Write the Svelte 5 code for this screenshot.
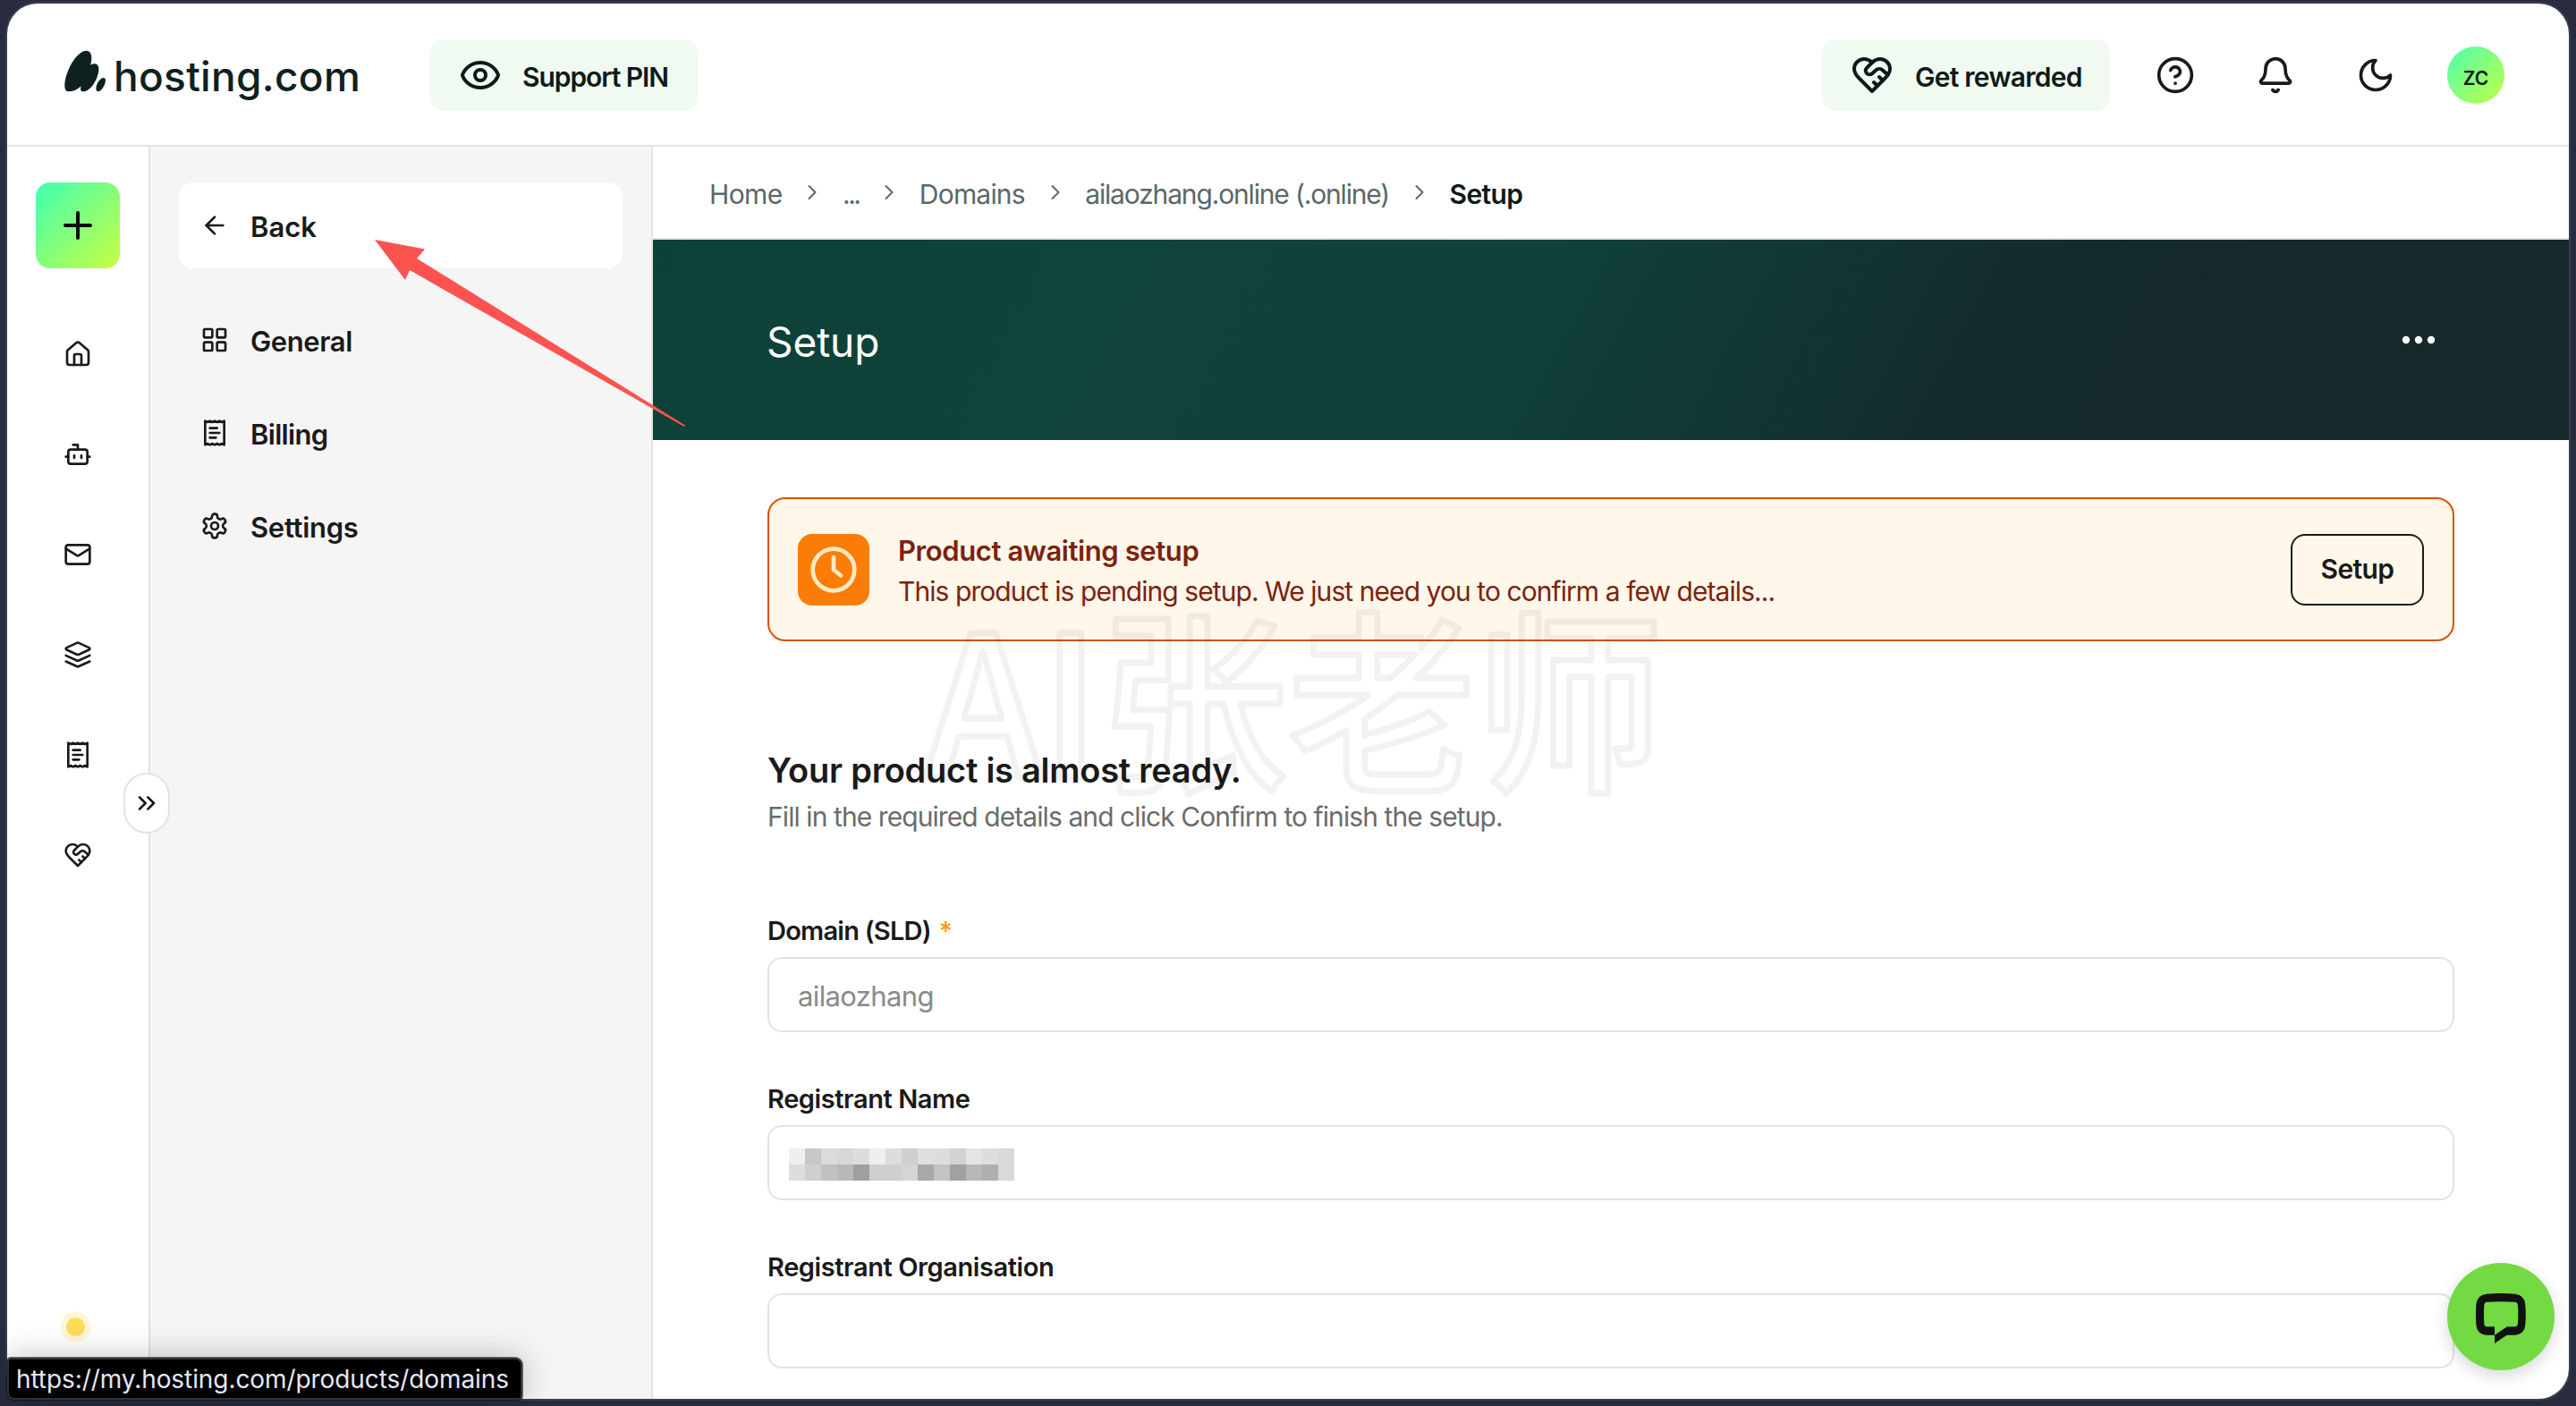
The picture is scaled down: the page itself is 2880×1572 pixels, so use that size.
<script lang="ts">
	const icons: Record<string, string[]> = {
		eye: [
			"M2.062 12.348a1 1 0 0 1 0-.696 10.75 10.75 0 0 1 19.876 0 1 1 0 0 1 0 .696 10.75 10.75 0 0 1-19.876 0",
			"M9 12a3 3 0 1 0 6 0 3 3 0 1 0-6 0",
		],
		heart: [
			"M19 14c1.49-1.46 3-3.21 3-5.5A5.5 5.5 0 0 0 16.5 3c-1.76 0-3 .5-4.5 2-1.5-1.5-2.74-2-4.5-2A5.5 5.5 0 0 0 2 8.5c0 2.3 1.5 4.05 3 5.5l7 7Z",
			"M12 5 9.04 7.96a2.17 2.17 0 0 0 0 3.08c.82.82 2.13.85 3 .07l2.07-1.9a2.82 2.82 0 0 1 3.79 0l2.96 2.66",
			"m18 15-2-2",
			"m15 18-2-2",
		],
		help: [
			"M2 12a10 10 0 1 0 20 0 10 10 0 1 0-20 0",
			"M9.09 9a3 3 0 0 1 5.83 1c0 2-3 3-3 3",
			"M12 17h.01",
		],
		bell: [
			"M10.268 21a2 2 0 0 0 3.464 0",
			"M3.262 15.326A1 1 0 0 0 4 17h16a1 1 0 0 0 .74-1.673C19.41 13.956 18 12.499 18 8A6 6 0 0 0 6 8c0 4.499-1.411 5.956-2.738 7.326",
		],
		moon: ["M12 3a6 6 0 0 0 9 9 9 9 0 1 1-9-9Z"],
		plus: ["M5 12h14", "M12 5v14"],
		home: [
			"M15 21v-8a1 1 0 0 0-1-1h-4a1 1 0 0 0-1 1v8",
			"M3 10a2 2 0 0 1 .709-1.528l7-6a2 2 0 0 1 2.582 0l7 6A2 2 0 0 1 21 10v9a2 2 0 0 1-2 2H5a2 2 0 0 1-2-2z",
		],
		bot: [
			"M12 8V4H8",
			"M6 8h12a2 2 0 0 1 2 2v8a2 2 0 0 1-2 2H6a2 2 0 0 1-2-2v-8a2 2 0 0 1 2-2Z",
			"M2 14h2",
			"M20 14h2",
			"M15 13v2",
			"M9 13v2",
		],
		mail: [
			"M4 4h16a2 2 0 0 1 2 2v12a2 2 0 0 1-2 2H4a2 2 0 0 1-2-2V6a2 2 0 0 1 2-2Z",
			"m22 7-8.97 5.7a1.94 1.94 0 0 1-2.06 0L2 7",
		],
		layers: [
			"m12.83 2.18a2 2 0 0 0-1.66 0L2.6 6.08a1 1 0 0 0 0 1.83l8.58 3.91a2 2 0 0 0 1.66 0l8.58-3.9a1 1 0 0 0 0-1.83Z",
			"m22 12.65-9.17 4.16a2 2 0 0 1-1.66 0L2 12.65",
			"m22 17.65-9.17 4.16a2 2 0 0 1-1.66 0L2 17.65",
		],
		receipt: [
			"M4 2v20l2-1 2 1 2-1 2 1 2-1 2 1 2-1 2 1V2l-2 1-2-1-2 1-2-1-2 1-2-1-2 1Z",
			"M14 8H8",
			"M16 12H8",
			"M13 16H8",
		],
		arrowLeft: ["m12 19-7-7 7-7", "M19 12H5"],
		grid: [
			"M4 3h5a1 1 0 0 1 1 1v5a1 1 0 0 1-1 1H4a1 1 0 0 1-1-1V4a1 1 0 0 1 1-1Z",
			"M15 3h5a1 1 0 0 1 1 1v5a1 1 0 0 1-1 1h-5a1 1 0 0 1-1-1V4a1 1 0 0 1 1-1Z",
			"M15 14h5a1 1 0 0 1 1 1v5a1 1 0 0 1-1 1h-5a1 1 0 0 1-1-1v-5a1 1 0 0 1 1-1Z",
			"M4 14h5a1 1 0 0 1 1 1v5a1 1 0 0 1-1 1H4a1 1 0 0 1-1-1v-5a1 1 0 0 1 1-1Z",
		],
		settings: [
			"M12.22 2h-.44a2 2 0 0 0-2 2v.18a2 2 0 0 1-1 1.73l-.43.25a2 2 0 0 1-2 0l-.15-.08a2 2 0 0 0-2.73.73l-.22.38a2 2 0 0 0 .73 2.73l.15.1a2 2 0 0 1 1 1.72v.51a2 2 0 0 1-1 1.74l-.15.09a2 2 0 0 0-.73 2.73l.22.38a2 2 0 0 0 2.73.73l.15-.08a2 2 0 0 1 2 0l.43.25a2 2 0 0 1 1 1.73V20a2 2 0 0 0 2 2h.44a2 2 0 0 0 2-2v-.18a2 2 0 0 1 1-1.73l.43-.25a2 2 0 0 1 2 0l.15.08a2 2 0 0 0 2.73-.73l.22-.39a2 2 0 0 0-.73-2.73l-.15-.08a2 2 0 0 1-1-1.74v-.5a2 2 0 0 1 1-1.74l.15-.09a2 2 0 0 0 .73-2.73l-.22-.38a2 2 0 0 0-2.73-.73l-.15.08a2 2 0 0 1-2 0l-.43-.25a2 2 0 0 1-1-1.73V4a2 2 0 0 0-2-2z",
			"M9 12a3 3 0 1 0 6 0 3 3 0 1 0-6 0",
		],
		chevron: ["m9 18 6-6-6-6"],
		chevrons: ["m6 17 5-5-5-5", "m13 17 5-5-5-5"],
		clock: ["M2 12a10 10 0 1 0 20 0 10 10 0 1 0-20 0", "M12 6v6l3.5 2.8"],
	};

	const rail = ["home", "bot", "mail", "layers", "receipt", "heart"];

	const menu = [
		{ icon: "grid", label: "General", spacing: "-0.4px" },
		{ icon: "receipt", label: "Billing", spacing: "-0.7px" },
		{ icon: "settings", label: "Settings", spacing: "-0.3px" },
	];

	const crumbs = [
		{ label: "Home", spacing: "-0.6px" },
		{ label: "...", spacing: "-2.5px" },
		{ label: "Domains", spacing: "-0.8px" },
		{ label: "ailaozhang.online (.online)", spacing: "-1.16px" },
	];

	// grey levels of the masked name, two rows of blocks
	const mask = [
		[239, 199, 219, 215, 221, 239, 221, 207, 223, 221, 211, 228, 221, 217],
		[221, 207, 193, 184, 159, 207, 207, 213, 168, 195, 161, 184, 175, 217],
	];
</script>

{#snippet icon(name: string, size: number, stroke = 2)}
	<svg
		width={size}
		height={size}
		viewBox="0 0 24 24"
		fill="none"
		stroke="currentColor"
		stroke-width={stroke}
		stroke-linecap="round"
		stroke-linejoin="round"
	>
		{#each icons[name] as d}
			<path {d} />
		{/each}
	</svg>
{/snippet}

<div class="window">
	<header>
		<div class="logo">
			<svg width="47" height="47" viewBox="36 46 140 142">
				<path d="M36 165C37 120 75 48 110 48c18 0 20 27 13 49 13-9 28-5 28 13 0 30-26 76-53 76-8 0-10-8-7-18-13 12-29 18-41 18-10 0-14-8-14-21Z" />
				<path d="M142 175c0-14 14-35 25-35 10 0 8 15 1 28-6 11-13 18-19 18-5 0-7-5-7-11Z" />
			</svg>
			<span>hosting.com</span>
		</div>
		<button class="pill pin">{@render icon("eye", 48)}<span>Support PIN</span></button>
		<div class="spacer"></div>
		<button class="pill rewards">{@render icon("heart", 48)}<span>Get rewarded</span></button>
		<div class="tools">
			<button>{@render icon("help", 44)}</button>
			<button>{@render icon("bell", 44)}</button>
			<button>{@render icon("moon", 44)}</button>
		</div>
		<div class="avatar"><span>ZC</span></div>
	</header>

	<div class="body">
		<nav class="rail">
			<button class="add">{@render icon("plus", 48)}</button>
			<div class="rail-icons">
				{#each rail as name}
					<button>{@render icon(name, 32)}</button>
				{/each}
			</div>
			<div class="status-dot"></div>
			<button class="toggle">{@render icon("chevrons", 32)}</button>
		</nav>

		<aside>
			<button class="item back">{@render icon("arrowLeft", 32)}<span>Back</span></button>
			<div class="menu">
				{#each menu as m}
					<button class="item">
						{@render icon(m.icon, 32)}
						<span style="letter-spacing: {m.spacing}">{m.label}</span>
					</button>
				{/each}
			</div>
		</aside>

		<main>
			<div class="crumbs">
				{#each crumbs as c}
					<span style="letter-spacing: {c.spacing}">{c.label}</span>
					{@render icon("chevron", 28, 1.7)}
				{/each}
				<span class="current">Setup</span>
			</div>

			<div class="hero">
				<h1>Setup</h1>
				<svg width="48" height="48" viewBox="0 0 48 48" fill="#fff">
					<circle cx="10" cy="24" r="4.2" />
					<circle cx="24" cy="24" r="4.2" />
					<circle cx="38" cy="24" r="4.2" />
				</svg>
			</div>

			<div class="content">
				<div class="alert">
					<div class="alert-icon">{@render icon("clock", 56)}</div>
					<div class="alert-text">
						<strong>Product awaiting setup</strong>
						<p>This product is pending setup. We just need you to confirm a few details...</p>
					</div>
					<button class="setup"><span>Setup</span></button>
				</div>

				<h2>Your product is almost ready.</h2>
				<p class="lead">Fill in the required details and click Confirm to finish the setup.</p>

				<form>
					<div class="field">
						<div class="label sld">Domain (SLD) <em>*</em></div>
						<div class="input"><span>ailaozhang</span></div>
					</div>
					<div class="field">
						<div class="label">Registrant Name</div>
						<div class="input masked">
							<div class="mask">
								{#each mask.flat() as g}
									<i style="background: rgb({g}, {g}, {g})"></i>
								{/each}
							</div>
						</div>
					</div>
					<div class="field">
						<div class="label">Registrant Organisation</div>
						<div class="input"></div>
					</div>
				</form>
			</div>
		</main>
	</div>
</div>

<svg class="watermark" width="900" height="340" viewBox="0 0 900 340">
	<text transform="translate(34 229) scale(1 1.04)">AI张老师</text>
</svg>

<svg class="pointer" width="360" height="220" viewBox="0 0 360 220">
	<path d="M9 8 65 18.5 56 29 356 215.500 355 217 48 42 43 53Z" />
</svg>

<button class="chat" aria-label="Chat">
	<svg width="56" height="56" viewBox="624 258 168 168">
		<path
			fill-rule="evenodd"
			d="M660 260Q708 256 756 260 788 264 790 296 793 330 790 362 788 396 752 398H728L687 426V370H662Q652 370 652 360 650 330 652 298 652 288 662 287 708 284 754 287 764 288 765 298 767 330 765 360 764 370 754 370H729L687 398H662Q628 396 625 362 623 330 625 296 628 263 660 260Z"
		/>
	</svg>
</button>

<div class="link-status">https://my.hosting.com/products/domains</div>

<style>
	:global(body) {
		background: #282c3e;
		overflow: hidden;
	}

	:global(#app) {
		position: relative;
		height: 1572px;
		padding: 4px 8px 8px;
		box-sizing: border-box;
		font-family: Inter, "Noto Sans CJK SC", sans-serif;
		color: #1a1a1a;
	}

	button {
		font: inherit;
		color: inherit;
		border: none;
		background: none;
		padding: 0;
	}

	svg {
		display: block;
		flex: none;
	}

	p,
	h1,
	h2 {
		margin: 0;
	}

	span {
		white-space: nowrap;
	}

	.window {
		height: 1560px;
		display: flex;
		flex-direction: column;
		background: #fff;
		border-radius: 34px;
		box-shadow: 0 0 0 2px #3a3f4e;
		overflow: hidden;
	}

	header {
		height: 158px;
		flex: none;
		display: flex;
		align-items: center;
		padding: 0 72px 0 64px;
		border-bottom: 2px solid #e3e3e3;
	}

	header svg {
		margin-top: 2px;
	}

	.logo {
		display: flex;
		align-items: center;
		gap: 8px;
		width: 409px;
		fill: #0e2120;
		color: #0e2120;
		font-size: 46px;
		font-weight: 500;
		letter-spacing: 0.3px;
	}

	.logo svg {
		margin-top: -8px;
	}

	.logo span {
		padding-top: 3px;
	}

	.pill {
		height: 80px;
		margin-top: 2px;
		display: flex;
		align-items: center;
		padding: 0 32px;
		border-radius: 16px;
		background: #f0faf0;
		color: #0e1a1a;
		font-size: 30px;
		font-weight: 560;
	}

	.pill svg {
		margin-top: 0;
	}

	.pill span {
		padding-top: 3px;
	}

	.pin {
		width: 299px;
		gap: 23px;
		letter-spacing: -1.05px;
	}

	.rewards {
		width: 322px;
		gap: 24px;
		letter-spacing: -0.75px;
	}

	.spacer {
		flex: 1;
	}

	.tools {
		display: flex;
		margin-left: 17px;
	}

	.tools button {
		width: 112px;
		display: flex;
		justify-content: center;
	}

	.avatar {
		width: 64px;
		height: 64px;
		margin: 2px 0 0 24px;
		display: flex;
		align-items: center;
		justify-content: center;
		border-radius: 50%;
		background: linear-gradient(135deg, #4dffb0, #c0ff45);
		color: #0e1a1a;
		font-size: 21px;
		font-weight: 560;
	}

	.avatar span {
		padding-top: 7px;
	}

	.body {
		flex: 1;
		min-height: 0;
		display: flex;
	}

	.rail {
		position: relative;
		z-index: 1;
		width: 158px;
		flex: none;
		display: flex;
		flex-direction: column;
		align-items: center;
		padding-top: 40px;
		border-right: 2px solid #e3e3e3;
	}

	.add {
		width: 94px;
		height: 96px;
		display: flex;
		align-items: center;
		justify-content: center;
		border-radius: 16px;
		background: linear-gradient(135deg, #40ffb4, #c8ff40);
		color: #0a0a0a;
	}

	.rail-icons {
		margin-top: 40px;
	}

	.rail-icons button {
		height: 112px;
		display: flex;
		align-items: center;
	}

	.status-dot {
		width: 21px;
		height: 21px;
		margin: 461px 6px 0 0;
		border-radius: 50%;
		background: #ffdc57;
		box-shadow: 0 0 0 6.5px #fff6da;
	}

	.toggle {
		position: absolute;
		top: 700px;
		right: -24px;
		width: 52px;
		height: 68px;
		display: flex;
		align-items: center;
		justify-content: center;
		box-sizing: border-box;
		border: 2px solid #e3e3e3;
		border-radius: 26px;
		background: #fff;
	}

	aside {
		width: 560px;
		flex: none;
		box-sizing: content-box;
		padding-top: 40px;
		border-right: 2px solid #e3e3e3;
		background: #f5f5f5;
	}

	.item {
		width: 496px;
		height: 104px;
		box-sizing: border-box;
		margin-left: 32px;
		display: flex;
		align-items: center;
		gap: 24px;
		padding-left: 24px;
		font-size: 31px;
		font-weight: 560;
	}

	.item span {
		padding-top: 3px;
	}

	.back {
		height: 96px;
		border-radius: 16px;
		background: #fff;
	}

	.menu {
		margin-top: 28px;
	}

	main {
		flex: 1;
		min-width: 0;
	}

	.crumbs {
		height: 102px;
		display: flex;
		align-items: center;
		gap: 19.7px;
		padding-left: 63px;
		border-bottom: 2px solid #e3e3e3;
		color: #5a6868;
		font-size: 30px;
	}

	.crumbs span {
		padding-top: 3px;
	}

	.crumbs .current {
		color: #0e1a1a;
		font-weight: 560;
		letter-spacing: -0.6px;
	}

	.hero {
		height: 224px;
		display: flex;
		align-items: center;
		justify-content: space-between;
		padding: 0 144px 0 127px;
		background: linear-gradient(118deg, #0d4037 0%, #10433b 25%, #10413a 45%, #123631 58%, #142b2b 70%, #15282b 80%, #15282a 100%);
		color: #fff;
	}

	h1 {
		padding-top: 3px;
		font-size: 46px;
		font-weight: 420;
		letter-spacing: -0.1px;
	}

	.content {
		padding: 64px 128px 0;
	}

	.alert {
		height: 161px;
		box-sizing: border-box;
		display: flex;
		align-items: center;
		gap: 32px;
		padding: 0 32px;
		border: 2px solid #dc5200;
		border-radius: 20px;
		background: #fff7e9;
		color: #7c220e;
		font-size: 30px;
		line-height: 45px;
	}

	.alert-icon {
		width: 80px;
		height: 80px;
		display: flex;
		align-items: center;
		justify-content: center;
		border-radius: 16px;
		background: #fc7c08;
		color: #ffe9c2;
	}

	.alert-text {
		flex: 1;
		padding-top: 4px;
		white-space: nowrap;
	}

	.alert-text strong {
		font-size: 31px;
		font-weight: 560;
		letter-spacing: -0.4px;
	}

	.alert-text p {
		letter-spacing: -0.93px;
	}

	.setup {
		width: 149px;
		height: 80px;
		box-sizing: border-box;
		border: 2px solid #1a1a1a;
		border-radius: 16px;
		color: #1a1a1a;
		font-weight: 560;
		letter-spacing: -0.6px;
	}

	h2 {
		margin-top: 118px;
		font-size: 38px;
		font-weight: 560;
		line-height: 52px;
		letter-spacing: -0.25px;
	}

	.lead {
		margin-top: 2px;
		color: #6b6b6b;
		font-size: 30px;
		line-height: 48px;
		letter-spacing: -0.92px;
	}

	form {
		display: flex;
		flex-direction: column;
		gap: 54px;
		margin-top: 83px;
	}

	.label {
		padding-top: 1px;
		font-size: 29px;
		font-weight: 560;
		line-height: 40px;
		letter-spacing: -0.42px;
	}

	.sld {
		letter-spacing: -0.75px;
	}

	.label em {
		margin-left: 2px;
		color: #ff9a1f;
		font-style: normal;
	}

	.input {
		height: 84px;
		margin-top: 9px;
		box-sizing: border-box;
		display: flex;
		align-items: center;
		padding: 3px 32px 0;
		border: 2px solid #e3e3e3;
		border-radius: 16px;
		color: #8a8a8a;
		font-size: 31px;
		letter-spacing: -0.62px;
	}

	.masked {
		padding: 4px 22px 0;
	}

	.mask {
		display: grid;
		grid-template-columns: repeat(14, 18px);
		grid-auto-rows: 18px;
	}

	.watermark {
		position: absolute;
		left: 1000px;
		top: 640px;
		pointer-events: none;
	}

	.watermark text {
		font-family: "Noto Sans CJK SC", sans-serif;
		font-size: 210px;
		font-weight: 500;
		fill: none;
		stroke: rgba(0, 0, 0, 0.05);
		stroke-width: 7px;
		stroke-linejoin: round;
	}

	.pointer {
		position: absolute;
		left: 410px;
		top: 260px;
		fill: #fc5351;
		pointer-events: none;
		z-index: 2;
	}

	.chat {
		position: absolute;
		left: 2736px;
		top: 1412px;
		width: 120px;
		height: 120px;
		display: flex;
		align-items: center;
		justify-content: center;
		border-radius: 50%;
		background: #74da43;
		box-shadow: 0 6px 18px rgba(0, 0, 0, 0.16);
		fill: #111;
	}

	.chat svg {
		margin-top: 4px;
	}

	.link-status {
		position: absolute;
		z-index: 2;
		left: 8px;
		top: 1518px;
		width: 576px;
		height: 47px;
		box-sizing: border-box;
		padding-left: 8px;
		border: 2px solid #333;
		border-radius: 4px 8px 4px 8px;
		background: #000;
		box-shadow: 0 0 0 1px rgba(0, 0, 0, 0.5), 0 0 36px rgba(0, 0, 0, 0.25);
		color: #e2e8fa;
		font-size: 28px;
		line-height: 44px;
		letter-spacing: -0.08px;
		white-space: nowrap;
	}
</style>
